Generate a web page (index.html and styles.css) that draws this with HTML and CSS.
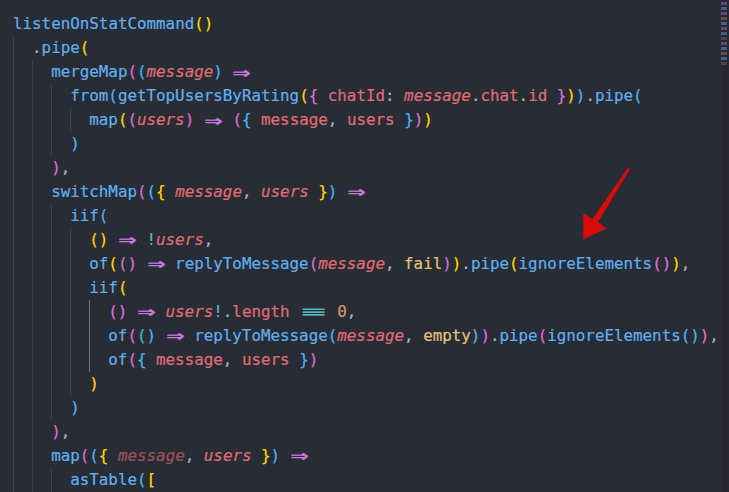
FILE: index.html
```html
<!DOCTYPE html>
<html>
<head>
<meta charset="utf-8">
<link rel="stylesheet" href="styles.css">
</head>
<body>
<div class="window">
  <div class="editor">
    <div class="line"><span class="f">listenOnStatCommand</span><span class="y">()</span></div>
    <div class="line"><span class="ind"></span><span class="g">.</span><span class="f">pipe</span><span class="y">(</span></div>
    <div class="line"><span class="ind"></span><span class="ind"></span><span class="f">mergeMap</span><span class="m">(</span><span class="b">(</span><span class="pi">message</span><span class="b">)</span> <span class="a">⇒</span></div>
    <div class="line"><span class="ind"></span><span class="ind"></span><span class="ind"></span><span class="f">from</span><span class="b">(</span><span class="f">getTopUsersByRating</span><span class="y">(</span><span class="m">{</span> <span class="v">chatId</span><span class="g">:</span> <span class="pi">message</span><span class="g">.</span><span class="v">chat</span><span class="g">.</span><span class="v">id</span> <span class="m">}</span><span class="y">)</span><span class="b">)</span><span class="g">.</span><span class="f">pipe</span><span class="b">(</span></div>
    <div class="line"><span class="ind"></span><span class="ind"></span><span class="ind"></span><span class="ind"></span><span class="f">map</span><span class="y">(</span><span class="m">(</span><span class="pi">users</span><span class="m">)</span> <span class="a">⇒</span> <span class="m">(</span><span class="b">{</span> <span class="v">message</span><span class="g">,</span> <span class="v">users</span> <span class="b">}</span><span class="m">)</span><span class="y">)</span></div>
    <div class="line"><span class="ind"></span><span class="ind"></span><span class="ind"></span><span class="b">)</span></div>
    <div class="line"><span class="ind"></span><span class="ind"></span><span class="m">)</span><span class="g">,</span></div>
    <div class="line"><span class="ind"></span><span class="ind"></span><span class="f">switchMap</span><span class="m">(</span><span class="b">(</span><span class="y">{</span> <span class="pi">message</span><span class="g">,</span> <span class="pi">users</span> <span class="y">}</span><span class="b">)</span> <span class="a">⇒</span></div>
    <div class="line"><span class="ind"></span><span class="ind"></span><span class="ind"></span><span class="f">iif</span><span class="b">(</span></div>
    <div class="line"><span class="ind"></span><span class="ind"></span><span class="ind"></span><span class="ind"></span><span class="y">()</span> <span class="a">⇒</span> <span class="t">!</span><span class="pi">users</span><span class="g">,</span></div>
    <div class="line"><span class="ind"></span><span class="ind"></span><span class="ind"></span><span class="ind"></span><span class="f">of</span><span class="y">(</span><span class="m">()</span> <span class="a">⇒</span> <span class="f">replyToMessage</span><span class="m">(</span><span class="pi">message</span><span class="g">,</span> <span class="k">fail</span><span class="m">)</span><span class="y">)</span><span class="g">.</span><span class="f">pipe</span><span class="y">(</span><span class="f">ignoreElements</span><span class="m">()</span><span class="y">)</span><span class="g">,</span></div>
    <div class="line"><span class="ind"></span><span class="ind"></span><span class="ind"></span><span class="ind"></span><span class="f">iif</span><span class="y">(</span></div>
    <div class="line"><span class="ind"></span><span class="ind"></span><span class="ind"></span><span class="ind"></span><span class="ind active"></span><span class="m">()</span> <span class="a">⇒</span> <span class="pi">users</span><span class="t">!</span><span class="g">.</span><span class="v">length</span> <span class="eq">≡</span> <span class="n">0</span><span class="g">,</span></div>
    <div class="line"><span class="ind"></span><span class="ind"></span><span class="ind"></span><span class="ind"></span><span class="ind active"></span><span class="f">of</span><span class="m">(</span><span class="b">()</span> <span class="a">⇒</span> <span class="f">replyToMessage</span><span class="b">(</span><span class="pi">message</span><span class="g">,</span> <span class="k">empty</span><span class="b">)</span><span class="m">)</span><span class="g">.</span><span class="f">pipe</span><span class="m">(</span><span class="f">ignoreElements</span><span class="b">()</span><span class="m">)</span><span class="g">,</span></div>
    <div class="line"><span class="ind"></span><span class="ind"></span><span class="ind"></span><span class="ind"></span><span class="ind active"></span><span class="f">of</span><span class="m">(</span><span class="b">{</span> <span class="v">message</span><span class="g">,</span> <span class="v">users</span> <span class="b">}</span><span class="m">)</span></div>
    <div class="line"><span class="ind"></span><span class="ind"></span><span class="ind"></span><span class="ind"></span><span class="y">)</span></div>
    <div class="line"><span class="ind"></span><span class="ind"></span><span class="ind"></span><span class="b">)</span></div>
    <div class="line"><span class="ind"></span><span class="ind"></span><span class="m">)</span><span class="g">,</span></div>
    <div class="line"><span class="ind"></span><span class="ind"></span><span class="f">map</span><span class="m">(</span><span class="b">(</span><span class="y">{</span> <span class="pi d">message</span><span class="g">,</span> <span class="pi">users</span> <span class="y">}</span><span class="b">)</span> <span class="a">⇒</span></div>
    <div class="line"><span class="ind"></span><span class="ind"></span><span class="ind"></span><span class="f">asTable</span><span class="b">(</span><span class="y">[</span></div>
  </div>
  <div class="minimap">
    <div class="mm-row mm-purple"></div>
    <div class="mm-row mm-blue"></div>
    <div class="mm-row mm-purple"></div>
    <div class="mm-row mm-red"></div>
    <div class="mm-row mm-blue"></div>
    <div class="mm-row mm-purple"></div>
    <div class="mm-row mm-blue"></div>
    <div class="mm-row mm-gray"></div>
    <div class="mm-row mm-purple"></div>
    <div class="mm-row mm-blue"></div>
    <div class="mm-row mm-red"></div>
    <div class="mm-row mm-blue"></div>
    <div class="mm-row mm-gray"></div>
  </div>
</div>
<svg class="arrow" width="729" height="492" viewBox="0 0 729 492">
  <polygon points="628,167.5 630.2,169 598,222 606.5,228.5 583,239.5 583.5,213 592.5,219" fill="#d80a0a"/>
</svg>
</body>
</html>
```
FILE: styles.css
```css
html, body {
  margin: 0;
  padding: 0;
  background: #282c34;
}
.window {
  display: flex;
  width: 729px;
  height: 492px;
  overflow: hidden;
}
.editor {
  flex: 1;
  min-width: 0;
  overflow: hidden;
  padding: 12px 0 0 13px;
  font-family: "DejaVu Sans Mono", monospace;
  font-size: 15.85px;
  line-height: 24px;
  color: #abb2bf;
  -webkit-text-stroke: 0.2px currentColor;
}
.line {
  height: 24px;
  white-space: pre;
}
.ind {
  display: inline-block;
  width: 2ch;
  height: 24px;
  vertical-align: top;
  box-shadow: inset 1px 0 0 #3b404a;
}
.ind.active {
  box-shadow: inset 1px 0 0 #6a707b;
}
.f { color: #61afef; }
.pi { color: #e06c75; font-style: italic; }
.v { color: #e06c75; }
.d { opacity: 0.6; }
.g { color: #abb2bf; }
.y { color: #ffd700; }
.m { color: #da70d6; }
.b { color: #4fb2f3; }
.k { color: #e5c07b; }
.n { color: #d19a66; }
.t { color: #56b6c2; }
.a {
  display: inline-block;
  width: 2ch;
  text-align: center;
  color: #c678dd;
  font-weight: bold;
  transform: scale(1.9, 1.3);
}
.eq {
  display: inline-block;
  width: 3ch;
  text-align: center;
  color: #56b6c2;
  transform: scaleX(2.6);
}
.minimap {
  width: 8px;
  flex: none;
  background: #252830;
  display: flex;
  flex-direction: column;
  gap: 2px;
  padding-top: 2px;
}
.mm-row {
  height: 3px;
  width: 6px;
  opacity: 0.55;
}
.mm-purple { background: #9a5bb8; }
.mm-blue { background: #4f8fc4; }
.mm-red { background: #b65a66; }
.mm-gray { background: #5a6070; }
.arrow {
  position: absolute;
  left: 0;
  top: 0;
  pointer-events: none;
}
```
